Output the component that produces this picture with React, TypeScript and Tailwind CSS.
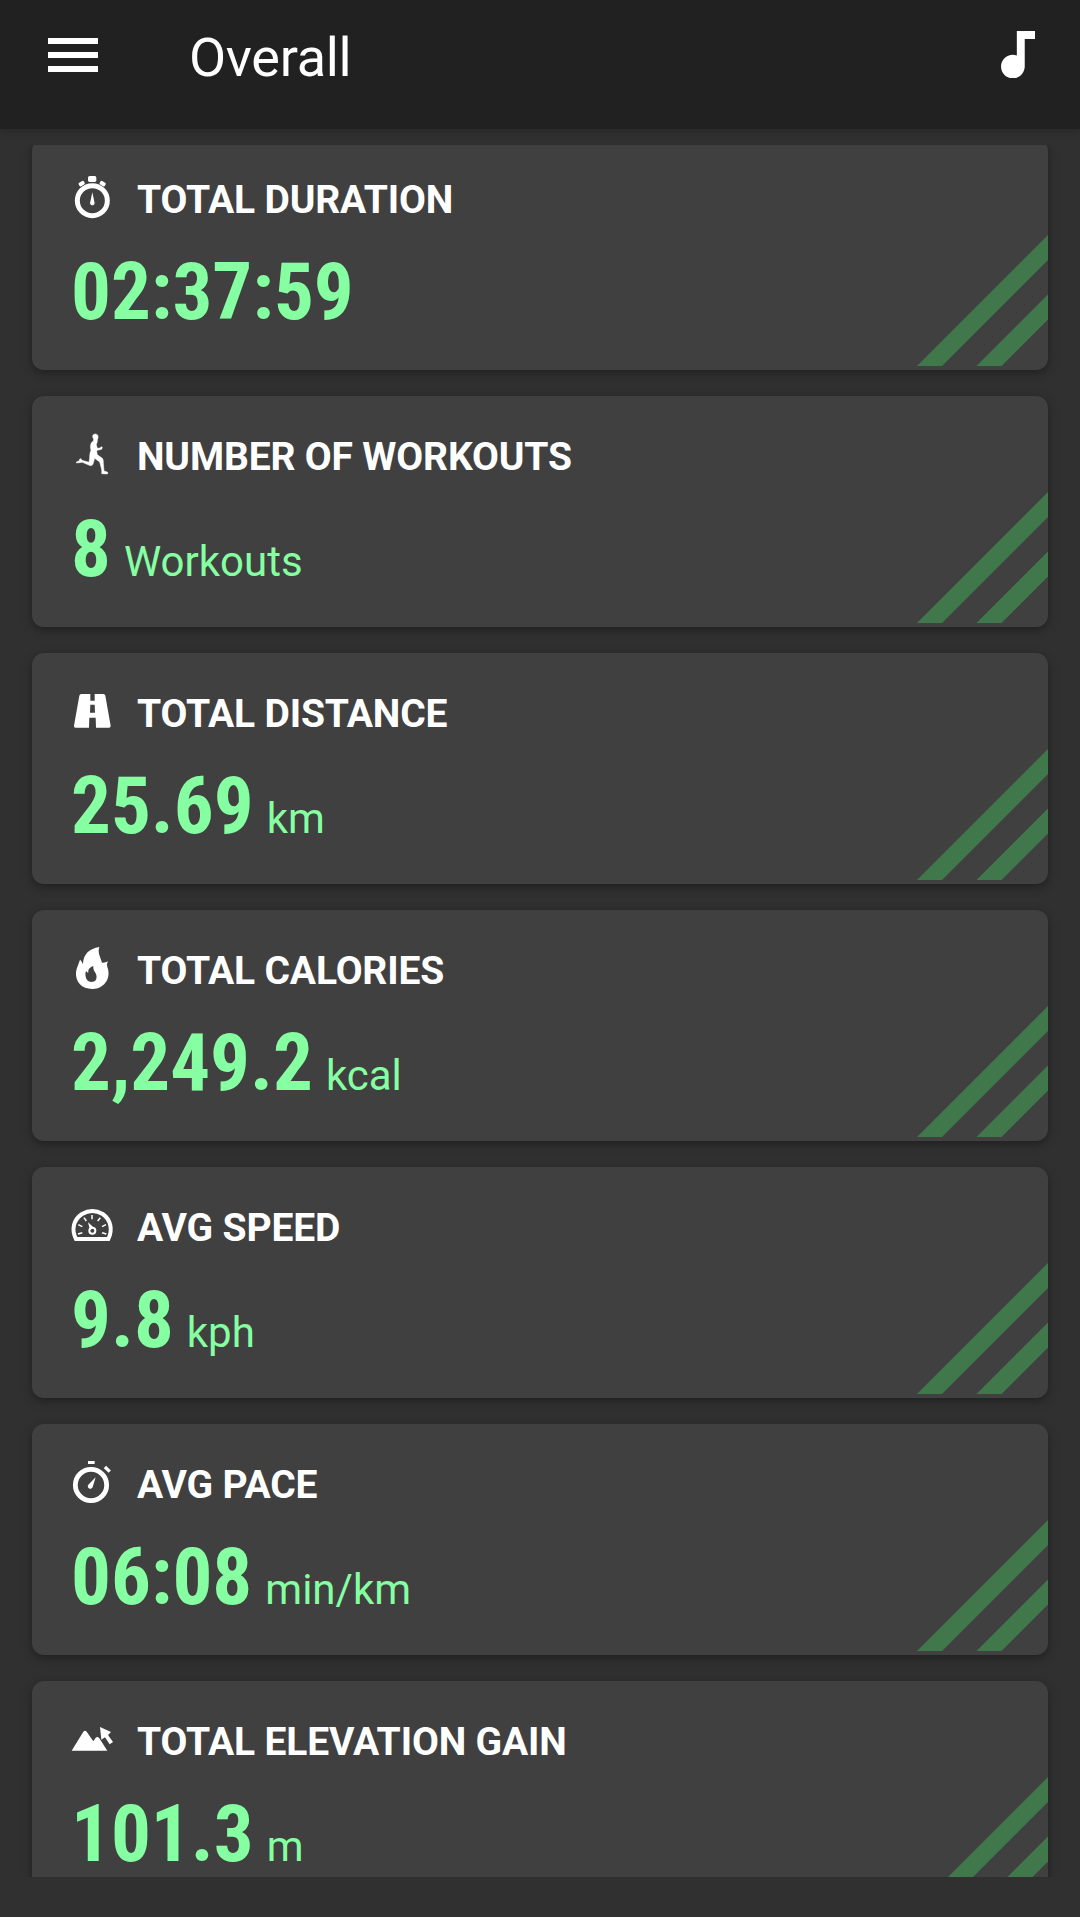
import type { ReactNode } from "react";

interface IStat {
  label: string;
  value: string;
  unit?: string;
  icon: ReactNode;
}

const StopwatchIcon = () => (
  <svg viewBox="24 39 144 144" className="size-12 shrink-0" fill="#fff">
    <circle cx="97" cy="122" r="45" fill="none" stroke="#fff" strokeWidth="15" />
    <rect x="84" y="48" width="25" height="18" rx="5" />
    <rect x="-9" y="-6" width="18" height="12" rx="4" transform="translate(65 71) rotate(-30)" />
    <rect x="-9" y="-6" width="18" height="12" rx="4" transform="translate(128 71) rotate(30)" />
    <path d="M97 97l6 28a7 7 0 1 1-12 0z" />
  </svg>
);

const RunnerIcon = () => (
  <svg viewBox="24 30 144 144" className="size-12 shrink-0" fill="#fff">
    <path
      d="M98 49C98 44 102 42 107 42C113 43 115 47 114 53C113 57 112 59 112 63C112 67 110 70 109 74L112 85L120 84L124 80L127 82L125 88L112 91L110 94L112 104L127 115C130 119 130 124 130 130L132 153L142 156L144 160L141 162L125 161C126 155 125 148 123 141L119 126L104 115L99 132C97 137 93 138 88 136L67 127L50 129L49 126L58 122L59 117L63 116L66 121L87 127L89 114C89 104 90 98 93 91C91 83 91 77 93 71C94 67 97 66 100 63L101 57C99 55 98 52 98 49Z"
      stroke="#fff"
      strokeWidth="1.5"
    />
  </svg>
);

const RoadIcon = () => (
  <svg viewBox="24 21 144 144" className="size-12 shrink-0" fill="#fff">
    <path d="M64 42H91V62H104V42H130Q135 42 136 47L152 137Q152 143 147 143H108L107 113H88L87 143H47Q41 143 42 137L58 47Q59 42 64 42ZM91 74L90 98H105L104 74Z" />
  </svg>
);

const FlameIcon = () => (
  <svg viewBox="24 27 144 144" className="size-12 shrink-0" fill="#fff">
    <path
      fillRule="evenodd"
      d="M118 36C112 52 121 66 126 83C132 84 139 82 144 79C139 87 141 94 144 102C152 134 130 161 99 162C66 163 46 142 48 112C49 99 56 88 60 74C65 77 66 83 69 87C70 57 88 41 118 36ZM100 93C88 97 84 104 85 113C82 112 79 110 78 107C74 118 77 129 82 136C89 143 103 142 108 134C112 126 109 118 105 112C101 106 99 100 100 93Z"
    />
  </svg>
);

const GaugeIcon = () => (
  <svg viewBox="24 33 144 144" className="size-12 shrink-0" fill="none" stroke="#fff">
    <path d="M48 147C33 118 41 89 66 72C86 60 108 60 128 72C152 89 159 118 145 147Z" strokeWidth="12" />
    <path
      d="M96 75v13M72 83l7 10M121 83l-8 10M55 104l12 6M138 104l-12 6M54 132l13-4M139 132l-13-4"
      strokeWidth="4.5"
    />
    <circle cx="97" cy="122" r="9" strokeWidth="6" />
    <path d="M84 97L102 113L90 120Z" fill="#fff" stroke="none" />
  </svg>
);

const PaceIcon = () => (
  <svg viewBox="24 24 144 144" className="size-12 shrink-0" fill="#fff">
    <circle cx="93" cy="105" r="47" fill="none" stroke="#fff" strokeWidth="14.5" />
    <rect x="84" y="33" width="20" height="9" />
    <rect x="-10" y="-5" width="20" height="10" transform="translate(142 58) rotate(43)" />
    <path d="M107 82L98 111A7.5 7.5 0 1 1 85 104Z" />
  </svg>
);

const MountainIcon = () => (
  <svg viewBox="24 30 144 144" className="size-12 shrink-0" fill="#fff">
    <path d="M35 137L70 80Q75 75 80 80L100 109L107 98Q112 94 117 98L142 137Z" />
    <path d="M120 66L153 81L144 90L159 111L149 118L135 97L124 104Z" />
  </svg>
);

const stats: IStat[] = [
  { label: "TOTAL DURATION", value: "02:37:59", icon: <StopwatchIcon /> },
  { label: "NUMBER OF WORKOUTS", value: "8", unit: "Workouts", icon: <RunnerIcon /> },
  { label: "TOTAL DISTANCE", value: "25.69", unit: "km", icon: <RoadIcon /> },
  { label: "TOTAL CALORIES", value: "2,249.2", unit: "kcal", icon: <FlameIcon /> },
  { label: "AVG SPEED", value: "9.8", unit: "kph", icon: <GaugeIcon /> },
  { label: "AVG PACE", value: "06:08", unit: "min/km", icon: <PaceIcon /> },
  { label: "TOTAL ELEVATION GAIN", value: "101.3", unit: "m", icon: <MountainIcon /> },
];

const StatCard = ({ stat }: { stat: IStat }) => {
  return (
    <div className="relative h-[231px] shrink-0 overflow-hidden rounded-xl bg-[#404040] px-9 pt-[34px] shadow-[0_3px_10px_rgba(0,0,0,0.35)]">
      {/* corner stripes */}
      <svg
        viewBox="0 0 131 131"
        className="absolute right-0 bottom-1 size-[131px]"
        fill="#40784c"
      >
        <path d="M0 131L131 0V25L25 131Z" />
        <path d="M59.5 131L131 59.5V84.5L84.5 131Z" />
      </svg>
      <div className="flex items-start gap-[21px]">
        {stat.icon}
        <h3 className="text-[39px] leading-[54px] font-bold tracking-[-0.15px] whitespace-nowrap text-white">
          {stat.label}
        </h3>
      </div>
      <div className="mt-[25px] ml-[3px] flex items-baseline gap-[13px] text-[#86ffa2]">
        <span className="font-['Roboto_Condensed',Roboto,sans-serif] text-[79px] leading-[80px] font-bold">
          {stat.value}
        </span>
        {stat.unit && <span className="text-[42px] leading-none">{stat.unit}</span>}
      </div>
    </div>
  );
};

const App = () => {
  return (
    <div className="flex h-[1917px] w-full flex-col overflow-hidden bg-[#303030] font-[Roboto,sans-serif]">
      <header className="flex h-[129px] shrink-0 items-center bg-[#212121] pr-[45px] pb-[14px] pl-12 text-white shadow-[0_2px_8px_rgba(0,0,0,0.2)]">
        <button aria-label="Menu" className="mt-[-5px] flex flex-col gap-[8.5px]">
          <span className="h-[5.7px] w-[50px] bg-white" />
          <span className="h-[5.7px] w-[50px] bg-white" />
          <span className="h-[5.7px] w-[50px] bg-white" />
        </button>
        <h1 className="ml-[91px] flex-1 text-[54px] leading-[115px] tracking-[-0.3px]">Overall</h1>
        <svg viewBox="6 3 13 18" className="mt-[-6px] h-[47.4px] w-[34.3px]" fill="#fff">
          <path d="M12 3v9.28c-.47-.17-.97-.28-1.5-.28C8.01 12 6 14.01 6 16.5S8.01 21 10.5 21c2.31 0 4.2-1.75 4.45-4H15V6h4V3h-7z" />
        </svg>
      </header>
      <main className="mt-4 h-[1732px] overflow-hidden px-8">
        <div className="-mt-1.5 flex flex-col gap-[26px]">
          {stats.map((stat) => (
            <StatCard key={stat.label} stat={stat} />
          ))}
        </div>
      </main>
    </div>
  );
};

export default App;
